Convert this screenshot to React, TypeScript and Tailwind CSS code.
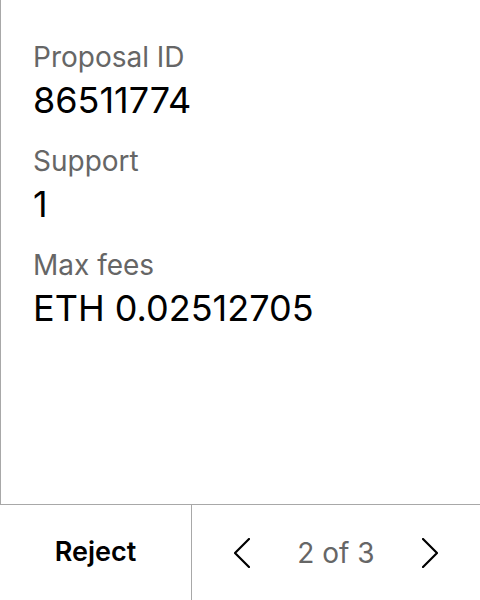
const fields = [
  { label: "Proposal ID", value: "86511774" },
  { label: "Support", value: "1" },
  { label: "Max fees", value: "ETH 0.02512705" },
];

function Chevron({ dir }: { dir: "left" | "right" }) {
  return (
    <svg width="16" height="30" viewBox="0 0 16 30" fill="none" stroke="black" strokeWidth="2.2" strokeLinecap="round" strokeLinejoin="round">
      {dir === "left" ? <polyline points="15,1 1,15 15,29" /> : <polyline points="1,1 15,15 1,29" />}
    </svg>
  );
}

export default function App() {
  return (
    <div className="flex h-[600px] w-[480px] flex-col bg-white font-['Inter',sans-serif]">
      <div className="flex flex-1 flex-col gap-[18px] border-l border-[#a8a8a8] px-[32px] pt-[40px]">
        {fields.map((f) => (
          <div key={f.label} className="flex flex-col">
            <span className="text-[28px] leading-[34px] text-[#666666]">{f.label}</span>
            <span className="text-[36px] leading-[52px] text-black">{f.value}</span>
          </div>
        ))}
      </div>
      <div className="flex h-[96px] border-t border-[#a8a8a8]">
        <button className="flex w-[192px] items-center justify-center border-r border-[#a8a8a8] text-[27px] font-semibold text-black">
          Reject
        </button>
        <div className="flex flex-1 items-center justify-center gap-[47px]">
          <Chevron dir="left" />
          <span className="text-[28px] text-[#666666]">2 of 3</span>
          <Chevron dir="right" />
        </div>
      </div>
    </div>
  );
}
